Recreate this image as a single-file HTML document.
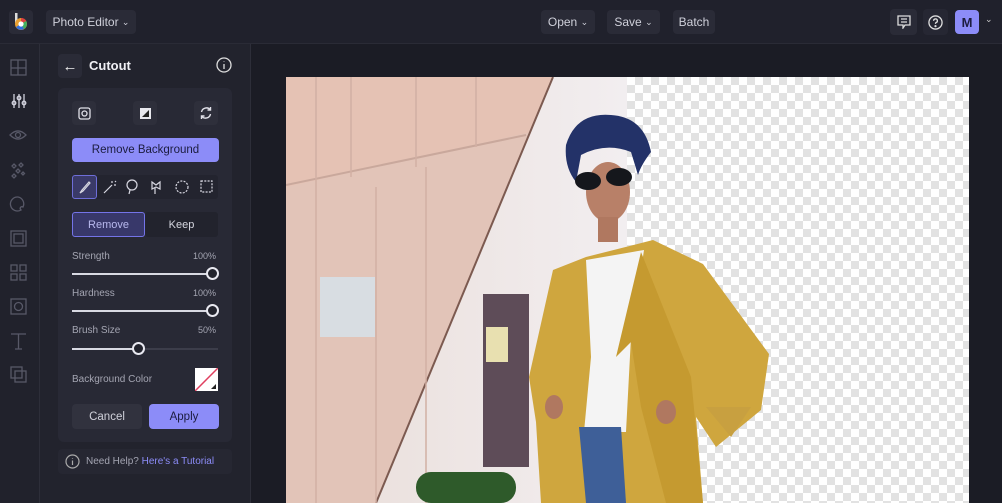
<!DOCTYPE html>
<html><head><meta charset="utf-8"><style>
*{box-sizing:border-box;margin:0;padding:0}
body{width:1002px;height:503px;overflow:hidden;background:#1b1c25;font-family:"Liberation Sans",sans-serif;color:#d8d9e2;position:relative}
.a{position:absolute}
.top{left:0;top:0;width:1002px;height:44px;background:#20212c;border-bottom:1px solid #2a2b36}
.btn{position:absolute;background:#2a2b37;border-radius:4px;font-size:12px;color:#cfd0da;display:flex;align-items:center;justify-content:center}
.rail{left:0;top:44px;width:40px;height:459px;background:#21222c;border-right:1px solid #2d2e39}
.panel{left:40px;top:44px;width:211px;height:459px;background:#22232d;border-right:1px solid #2d2e39}
.card{left:58px;top:88px;width:174px;height:354px;background:#282935;border-radius:6px}
.lbl{position:absolute;font-size:10px;color:#a4a5b2}
.track{position:absolute;left:72px;width:146px;height:2px;background:#3c3d4a}
.fill{position:absolute;left:0;top:0;height:2px;background:#d8d9e2}
.knob{position:absolute;width:13px;height:13px;border-radius:50%;border:2px solid #e8e8f0;background:#22232d;top:-6px}
.checker{background-color:#fff;background-image:linear-gradient(45deg,#e2e2e2 25%,transparent 25%,transparent 75%,#e2e2e2 75%),linear-gradient(45deg,#e2e2e2 25%,transparent 25%,transparent 75%,#e2e2e2 75%);background-size:16px 16px;background-position:0 0,8px 8px}
</style></head><body>
<div class="a top"></div>
<div class="btn" style="left:9px;top:10px;width:24px;height:24px;background:#2a2b37">
<svg width="16" height="18" viewBox="0 0 16 18"><rect x="2" y="0" width="2.5" height="10" fill="#ddd"/><circle cx="8" cy="11" r="6" fill="#e8a030"/><path d="M8 11 L8 5 A6 6 0 0 1 13.2 8Z" fill="#e04040"/><path d="M8 11 L13.2 8 A6 6 0 0 1 11 16Z" fill="#40b060"/><path d="M8 11 L11 16 A6 6 0 0 1 3 14Z" fill="#3070e0"/><circle cx="8" cy="11" r="2.6" fill="#fff"/></svg></div>
<div class="btn" style="left:46px;top:10px;width:90px;height:24px">Photo Editor&nbsp;<span style="font-size:9px">⌄</span></div>
<div class="btn" style="left:541px;top:10px;width:54px;height:24px">Open&nbsp;<span style="font-size:9px">⌄</span></div>
<div class="btn" style="left:607px;top:10px;width:53px;height:24px">Save&nbsp;<span style="font-size:9px">⌄</span></div>
<div class="btn" style="left:673px;top:10px;width:42px;height:24px">Batch</div>
<div class="btn" style="left:890px;top:9px;width:27px;height:26px"><svg width="14" height="14" viewBox="0 0 14 14" fill="none" stroke="#ddd" stroke-width="1.3"><path d="M1 1h12v9H8l-2 3v-3H1z"/><path d="M4 4h6M4 7h6"/></svg></div>
<div class="btn" style="left:923px;top:9px;width:25px;height:26px;background:#262733"><svg width="15" height="15" viewBox="0 0 16 16" fill="none" stroke="#ddd" stroke-width="1.4"><circle cx="8" cy="8" r="7"/><path d="M6 6.2a2 2 0 1 1 2.5 1.9c-.5.2-.5.6-.5 1.3"/><circle cx="8" cy="11.8" r=".5" fill="#ddd"/></svg></div>
<div class="btn" style="left:955px;top:10px;width:24px;height:24px;background:#8c8cf8;color:#1d1d40;font-weight:bold;font-size:13px">M</div>
<div class="a" style="left:985px;top:14px;font-size:9px;color:#ccc">⌄</div>

<div class="a rail"></div>
<svg class="a" style="left:0;top:44px" width="40" height="350" fill="none" stroke="#585968" stroke-width="1.3">
<rect x="11" y="16" width="15" height="15"/><path d="M11 24h15M18 16v15"/>
<g stroke="#d0d1dc"><path d="M14 50v14M19 50v14M24 50v14"/><circle cx="14" cy="59" r="1.8"/><circle cx="19" cy="54" r="1.8"/><circle cx="24" cy="59" r="1.8"/></g>
<path d="M10 91q8-8 16 0q-8 8-16 0z"/><circle cx="18" cy="91" r="2.5"/>
<path d="M14 120l2 2-2 2-2-2zM21 119l2 2-2 2-2-2zM18 125l2 2-2 2-2-2zM14 130l2 2-2 2-2-2zM23 128l1.5 1.5-1.5 1.5-1.5-1.5z"/>
<path d="M18 153a7 7 0 1 0 3 13c-2-2 0-4 2-3a7 7 0 0 0-5-10z"/>
<rect x="11" y="187" width="15" height="15"/><rect x="14" y="190" width="9" height="9"/>
<rect x="11" y="221" width="6" height="6"/><rect x="20" y="221" width="6" height="6"/><rect x="11" y="230" width="6" height="6"/><rect x="20" y="230" width="6" height="6"/>
<rect x="11" y="255" width="15" height="15"/><circle cx="18.5" cy="262.5" r="4"/>
<path d="M11 290h15M18.5 290v15M15 305h7"/>
<rect x="11" y="323" width="11" height="11"/><rect x="15" y="327" width="11" height="11"/>
</svg>

<div class="a panel"></div>
<div class="btn" style="left:58px;top:54px;width:24px;height:24px;background:#2a2b37;font-size:15px;color:#eee">←</div>
<div class="a" style="left:89px;top:58px;font-size:13px;font-weight:bold;color:#f0f0f5">Cutout</div>
<svg class="a" style="left:216px;top:57px" width="16" height="16" fill="none" stroke="#ddd" stroke-width="1.3"><circle cx="8" cy="8" r="7"/><path d="M8 7v5M8 4.5v.5"/></svg>
<div class="a card"></div>
<div class="btn" style="left:72px;top:101px;width:24px;height:24px;background:#2e2f3b"><svg width="13" height="13" fill="none" stroke="#e0e0e8" stroke-width="1.3"><rect x="1" y="1" width="11" height="11" rx="2"/><circle cx="6.5" cy="6.5" r="2.5"/></svg></div>
<div class="btn" style="left:133px;top:101px;width:24px;height:24px;background:#2e2f3b"><svg width="13" height="13"><rect x="1" y="1" width="11" height="11" fill="#e8e8ee"/><path d="M3 10L10 3v7z" fill="#222"/></svg></div>
<div class="btn" style="left:194px;top:101px;width:24px;height:24px;background:#2e2f3b"><svg width="14" height="14" fill="none" stroke="#e0e0e8" stroke-width="1.4"><path d="M2.5 6a5 5 0 0 1 9-2M11.5 8a5 5 0 0 1-9 2"/><path d="M11.5 1v3h-3M2.5 13v-3h3"/></svg></div>
<div class="btn" style="left:72px;top:138px;width:147px;height:24px;background:#8c8cf8;color:#1b1c3e;font-size:11.5px">Remove Background</div>
<div class="a" style="left:72px;top:175px;width:146px;height:24px;background:#23242f;border-radius:3px"></div>
<div class="a" style="left:72px;top:175px;width:25px;height:24px;background:#3a3a68;border:1px solid #6e6ed8;border-radius:3px"></div>
<svg class="a" style="left:72px;top:175px" width="146" height="24" fill="none" stroke="#d8d8e2" stroke-width="1.2">
<path d="M8 18l2-3 7-8 1 1-7 8z"/>
<path d="M32 18l8-8M40 8v-2M42 10h2M43 7l1-1"/>
<circle cx="60" cy="10" r="5"/><path d="M58 15l-1 4"/>
<path d="M80 7l4 3 4-3v7l-4-2-4 2zM83 13v6"/>
<circle cx="110" cy="12" r="6" stroke-dasharray="2 1.3"/>
<rect x="129" y="6" width="11" height="11" stroke-dasharray="2 1.3"/>
</svg>
<div class="btn" style="left:72px;top:212px;width:73px;height:25px;background:#38386a;border:1px solid #7474e8;color:#b8b9ee;font-size:11px;border-radius:3px">Remove</div>
<div class="btn" style="left:145px;top:212px;width:73px;height:25px;background:#22232d;color:#d6d7e0;font-size:11px;border-radius:3px">Keep</div>
<div class="lbl" style="left:72px;top:251px">Strength</div><div class="lbl" style="left:193px;top:251px;font-size:9px">100%</div>
<div class="track" style="top:273px"><div class="fill" style="width:140px"></div><div class="knob" style="left:134px"></div></div>
<div class="lbl" style="left:72px;top:288px">Hardness</div><div class="lbl" style="left:193px;top:288px;font-size:9px">100%</div>
<div class="track" style="top:310px"><div class="fill" style="width:140px"></div><div class="knob" style="left:134px"></div></div>
<div class="lbl" style="left:72px;top:325px">Brush Size</div><div class="lbl" style="left:198px;top:325px;font-size:9px">50%</div>
<div class="track" style="top:348px"><div class="fill" style="width:66px"></div><div class="knob" style="left:60px"></div></div>
<div class="lbl" style="left:72px;top:374px">Background Color</div>
<svg class="a" style="left:195px;top:368px" width="23" height="23"><rect width="23" height="23" fill="#fff"/><path d="M0 23L23 0" stroke="#e04060" stroke-width="1.5"/><path d="M16 21l5-5v5z" fill="#222"/></svg>
<div class="btn" style="left:72px;top:404px;width:70px;height:25px;background:#31323e;color:#d0d1da;font-size:11.5px">Cancel</div>
<div class="btn" style="left:149px;top:404px;width:70px;height:25px;background:#8c8cf8;color:#1b1c3e;font-size:11.5px">Apply</div>
<div class="a" style="left:58px;top:449px;width:174px;height:25px;background:#262732;border-radius:4px"></div>
<svg class="a" style="left:65px;top:454px" width="15" height="15" fill="none" stroke="#aaa" stroke-width="1.2"><circle cx="7.5" cy="7.5" r="6.5"/><path d="M7.5 6.5v4.5M7.5 4v.6"/></svg>
<div class="a" style="left:86px;top:456px;font-size:10px;color:#a4a5b2">Need Help? <span style="color:#8c8cf8">Here's a Tutorial</span></div>

<div class="a checker" style="left:627px;top:77px;width:342px;height:426px"></div>
<svg class="a" style="left:286px;top:77px" width="683" height="426">
<defs><linearGradient id="bg" x1="0" x2="1"><stop offset="0" stop-color="#e9ddd8"/><stop offset="1" stop-color="#f2eef0"/></linearGradient></defs>
<rect width="341" height="426" fill="url(#bg)"/>
<path d="M0 0H267L90 426H0Z" fill="#e2c4b8"/>
<path d="M0 0H267L245 55 L0 110Z" fill="#e5c2b4"/>
<path d="M267 0L90 426" stroke="#7c5a50" stroke-width="2"/>
<path d="M0 108L240 58" stroke="#c9a89c" stroke-width="2"/>
<path d="M30 0v426M65 0v100M130 0v90M190 0v70M90 110v316M140 90v336" stroke="#d2b0a4" stroke-width="1.5"/>
<rect x="34" y="200" width="55" height="60" fill="#d8dde2"/>
<rect x="197" y="217" width="46" height="173" fill="#5e4c58"/>
<rect x="200" y="250" width="22" height="35" fill="#e8e0b0"/>
<rect x="130" y="395" width="100" height="31" rx="15" fill="#2e5a2a"/>
<path d="M243 300L267 193L300 180L367 163L417 187L483 277L475 333L430 370L410 340L417 426L255 426L250 345Z" fill="#cfa63e"/>
<path d="M300 183L358 173L345 260L340 355L298 355L305 280Z" fill="#f4f4f4"/>
<path d="M293 350H335L340 426H300Z" fill="#3e5f98"/>
<path d="M355 175L330 280L345 265L355 330L380 426L417 426L405 300Z" fill="#c59a30"/>
<ellipse cx="322" cy="115" rx="22" ry="30" fill="#b88068"/>
<rect x="312" y="140" width="20" height="25" fill="#b07860"/>
<path d="M280 68Q290 35 325 38Q358 40 365 75Q355 88 352 98L345 75Q320 65 295 78L290 105Q278 90 280 68Z" fill="#233268"/>
<ellipse cx="302" cy="104" rx="13" ry="9" fill="#15171c"/><ellipse cx="333" cy="100" rx="13" ry="9" fill="#15171c"/>
<path d="M420 330l25 30 20-30" fill="#c8a040"/>
<ellipse cx="268" cy="330" rx="9" ry="12" fill="#b07860"/><ellipse cx="380" cy="335" rx="10" ry="12" fill="#b07860"/>
</svg>
</body></html>
